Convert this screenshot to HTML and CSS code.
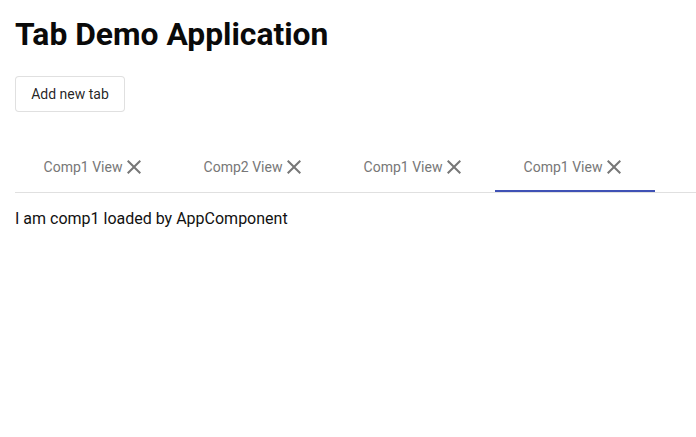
FILE: index.html
```html
<!DOCTYPE html>
<html>
<head>
<meta charset="utf-8">
<link rel="stylesheet" href="styles.css">
</head>
<body>
<h1 class="title">Tab Demo Application</h1>
<button class="add-btn">Add new tab</button>
<div class="tab-group">
  <div class="tab-header">
    <div class="tab"><span class="tab-text">Comp1 View</span><svg class="close" viewBox="0 0 24 24"><path d="M19 6.41L17.59 5 12 10.59 6.41 5 5 6.41 10.59 12 5 17.59 6.41 19 12 13.41 17.59 19 19 17.59 13.41 12z"/></svg></div>
    <div class="tab"><span class="tab-text">Comp2 View</span><svg class="close" viewBox="0 0 24 24"><path d="M19 6.41L17.59 5 12 10.59 6.41 5 5 6.41 10.59 12 5 17.59 6.41 19 12 13.41 17.59 19 19 17.59 13.41 12z"/></svg></div>
    <div class="tab"><span class="tab-text">Comp1 View</span><svg class="close" viewBox="0 0 24 24"><path d="M19 6.41L17.59 5 12 10.59 6.41 5 5 6.41 10.59 12 5 17.59 6.41 19 12 13.41 17.59 19 19 17.59 13.41 12z"/></svg></div>
    <div class="tab active"><span class="tab-text">Comp1 View</span><svg class="close" viewBox="0 0 24 24"><path d="M19 6.41L17.59 5 12 10.59 6.41 5 5 6.41 10.59 12 5 17.59 6.41 19 12 13.41 17.59 19 19 17.59 13.41 12z"/></svg></div>
  </div>
  <div class="tab-body">I am comp1 loaded by AppComponent</div>
</div>
</body>
</html>
```

FILE: styles.css
```css
html, body {
  margin: 0;
  background: #fff;
}
body {
  padding: 14px 0 0 15px;
  font-family: Roboto, "Liberation Sans", sans-serif;
  color: rgba(0, 0, 0, 0.87);
}
.title {
  margin: 0;
  font-size: 31.8px;
  line-height: 40px;
  font-weight: 700;
  color: #0a0a0a;
}
.add-btn {
  display: block;
  margin-top: 22px;
  width: 110px;
  height: 36px;
  padding: 0;
  border: 1px solid rgba(0, 0, 0, 0.12);
  border-radius: 4px;
  background: #fff;
  font-family: Roboto, "Liberation Sans", sans-serif;
  font-size: 14px;
  font-weight: 400;
  color: rgba(0, 0, 0, 0.87);
}
.tab-group {
  margin-top: 32px;
}
.tab-header {
  display: flex;
  border-bottom: 1px solid #e0e0e0;
}
.tab {
  position: relative;
  width: 160px;
  height: 48px;
  padding-bottom: 2px;
  box-sizing: border-box;
  display: flex;
  align-items: center;
  justify-content: center;
  font-size: 14px;
  color: #777;
}
.tab.active::after {
  content: "";
  position: absolute;
  left: 0;
  right: 0;
  bottom: 0;
  height: 2px;
  background: #3f51b5;
}
.close {
  width: 24px;
  height: 24px;
  fill: #777;
}
.tab-body {
  padding-top: 16px;
  font-size: 16px;
  line-height: 20px;
  color: #111;
}
```
